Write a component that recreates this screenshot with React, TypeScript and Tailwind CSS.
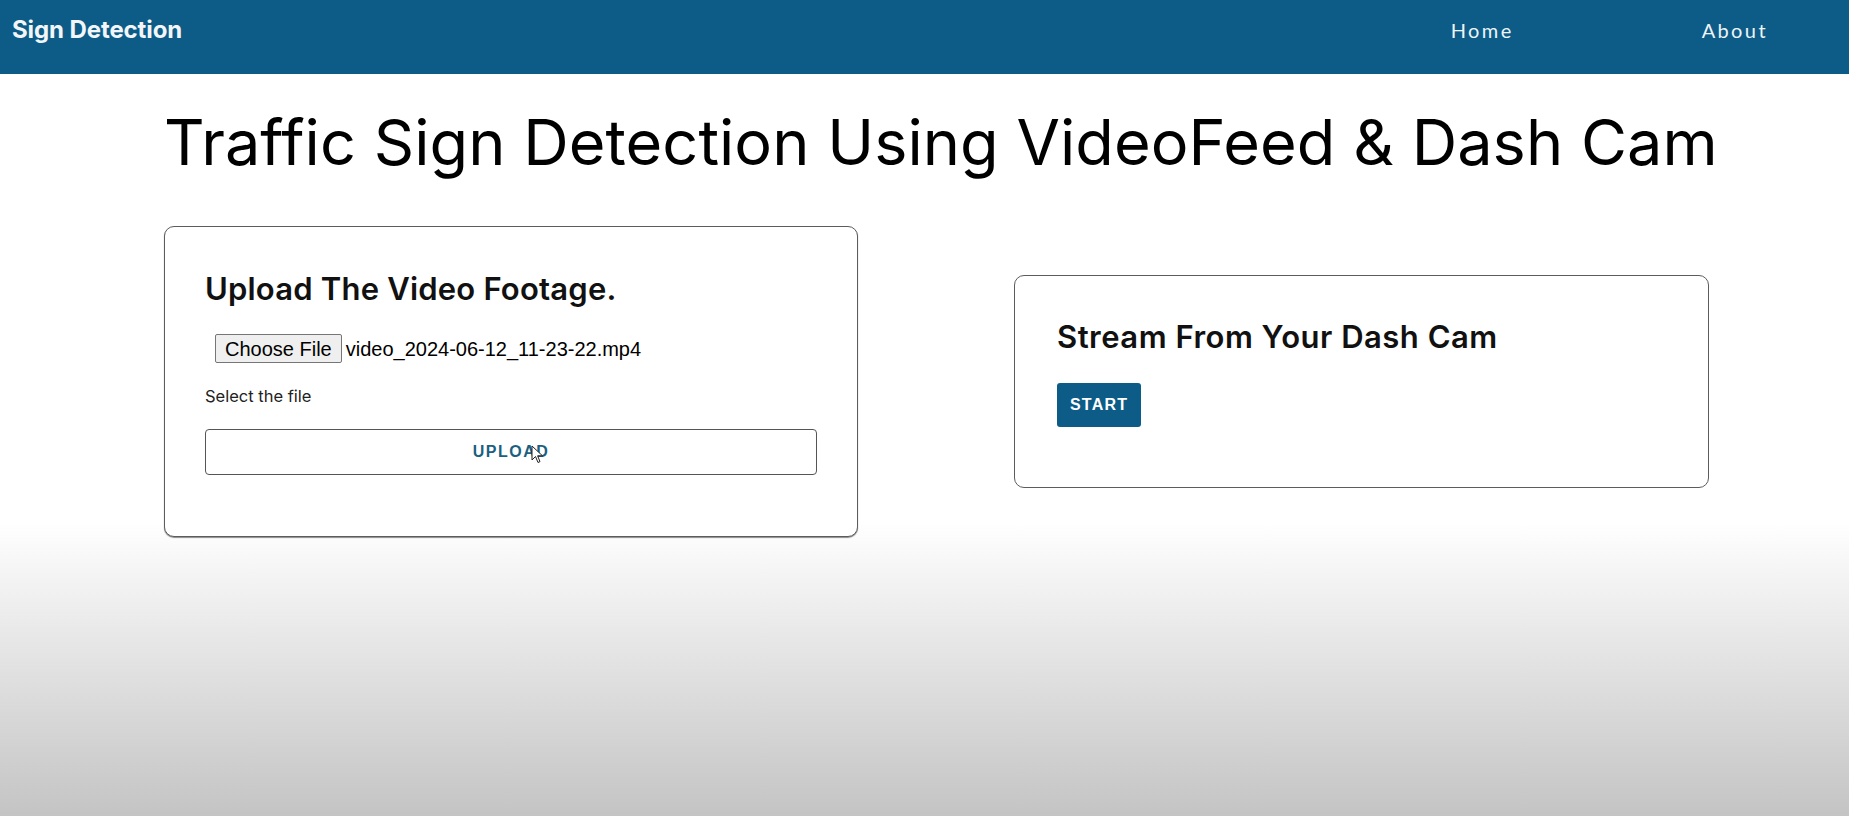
import { useState } from 'react';

const navLinks = ['Home', 'About'];

function Navbar() {
  return (
    <nav className="h-[74px] bg-[#0c5c87] flex items-start justify-between pt-[16px]">
      <span className="pl-[12px] text-[24px] leading-[28px] font-bold text-[#f3f6f8] font-['Inter',sans-serif] tracking-[-0.1px]">
        Sign Detection
      </span>
      <ul className="flex gap-[188px] pr-[81px]">
        {navLinks.map((l) => (
          <li key={l}>
            <a className="text-[20px] leading-[28px] text-[#eef4f7] tracking-[0.12em] font-['Lato',sans-serif]">
              {l}
            </a>
          </li>
        ))}
      </ul>
    </nav>
  );
}

function Pointer() {
  return (
    <svg
      className="absolute left-[326px] top-[16px]"
      width="13"
      height="20"
      viewBox="0 0 13 20"
    >
      <path
        d="M1 1 L1 15 L4.5 11.5 L7 17.5 L9 16.6 L6.6 10.8 L11.5 10.8 Z"
        fill="#fff"
        stroke="#222"
        strokeWidth="1"
        strokeLinejoin="round"
      />
    </svg>
  );
}

export default function App() {
  const [fileName] = useState('video_2024-06-12_11-23-22.mp4');

  return (
    <div className="min-h-screen bg-gradient-to-b from-white from-64% to-[#c4c4c4] font-['Inter',sans-serif]">
      <Navbar />

      <main className="ml-[164px] w-[1545px]">
        <h1 className="mt-[31px] text-center whitespace-nowrap text-[63px] leading-[74px] font-normal text-black tracking-[0.05px]">
          Traffic Sign Detection Using VideoFeed &amp; Dash Cam
        </h1>

        <div className="mt-[47px] flex items-center gap-[156px]">
          {/* upload card */}
          <section className="w-[694px] bg-white border border-[#5c5c5c] rounded-[10px] pl-[40px] pr-[40px] pt-[44px] pb-[61px] shadow-[0_1px_1px_rgba(0,0,0,0.45)]">
            <h2 className="text-[31px] leading-[36px] font-semibold text-[#111] tracking-[0.2px]">
              Upload The Video Footage.
            </h2>
            <div className="mt-[27px] ml-[10px] flex items-center gap-[4px] font-['Liberation_Sans',Arial,sans-serif]">
              <button className="h-[29px] px-[9px] text-[20px] leading-[24px] text-black bg-[#efefef] border border-[#767676] rounded-[2px]">
                Choose File
              </button>
              <span className="text-[20px] leading-[24px] text-black">{fileName}</span>
            </div>
            <p className="mt-[23px] text-[16.5px] leading-[20px] text-[#222]">Select the file</p>
            <div className="relative mt-[23px]">
              <button className="w-full h-[46px] border border-[#555] rounded-[4px] bg-white text-[16px] font-bold tracking-[1.5px] text-[#1b5f82] font-['Liberation_Sans',Arial,sans-serif]">
                UPLOAD
              </button>
              <Pointer />
            </div>
          </section>

          {/* dash cam card */}
          <section className="w-[695px] bg-white border border-[#5c5c5c] rounded-[10px] pl-[42px] pr-[41px] pt-[43px] pb-[60px]">
            <h2 className="text-[31px] leading-[36px] font-semibold text-[#111] tracking-[0.5px]">
              Stream From Your Dash Cam
            </h2>
            <button className="mt-[28px] h-[44px] px-[13px] bg-[#0c5c87] rounded-[3px] text-white text-[16px] font-bold tracking-[1.2px] font-['Liberation_Sans',Arial,sans-serif]">
              START
            </button>
          </section>
        </div>
      </main>
    </div>
  );
}
